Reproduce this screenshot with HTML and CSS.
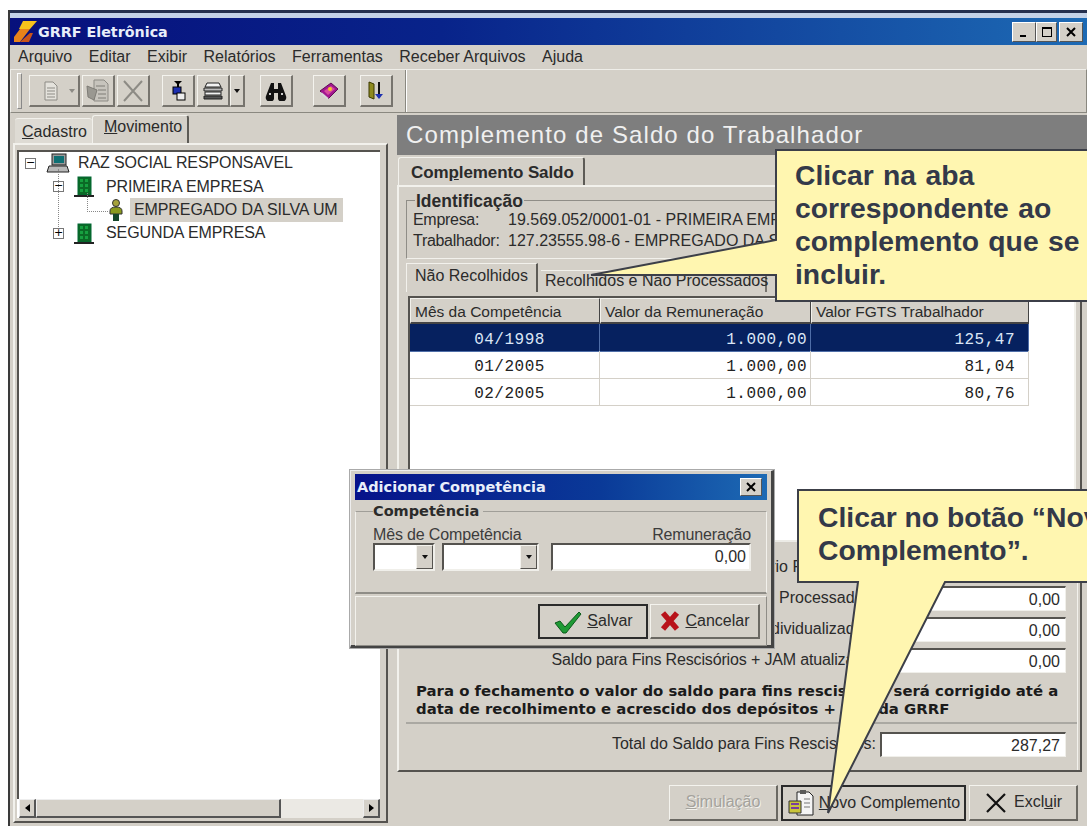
FILE: index.html
```html
<!DOCTYPE html>
<html lang="pt-BR">
<head>
<meta charset="utf-8">
<title>GRRF Eletrônica</title>
<link rel="stylesheet" href="styles.css">
</head>
<body>
<div class="window">
  <div class="top-edge"></div>
  <header class="titlebar">
    <svg class="logo" width="24" height="24" viewBox="0 0 24 24"><polygon points="9,1 23,1 16,9 5,9" fill="#f6c21c"/><polygon points="6,9 16,9 6,22 0,22 0,17" fill="#e8831a"/><polygon points="6,22 16,13 19,13 15,22" fill="#c9541a"/></svg>
    <span class="title-text">GRRF Eletrônica</span>
    <div class="win-buttons">
      <span class="win-btn"><svg width="14" height="14" viewBox="0 0 14 14"><rect x="3" y="10" width="6" height="2" fill="#000"/></svg></span>
      <span class="win-btn thin"><svg width="14" height="14" viewBox="0 0 14 14"><rect x="2.500" y="2.500" width="9" height="9" fill="none" stroke="#000"/><rect x="2" y="2" width="10" height="2" fill="#000"/></svg></span>
      <span class="win-btn gap"><svg width="14" height="14" viewBox="0 0 14 14"><path d="M3 3l8 8M11 3l-8 8" stroke="#000" stroke-width="2"/></svg></span>
    </div>
  </header>
  <nav class="menubar">
    <span>Arquivo</span><span>Editar</span><span>Exibir</span><span>Relatórios</span><span>Ferramentas</span><span>Receber Arquivos</span><span>Ajuda</span>
  </nav>
  <div class="toolbar">
    <div class="tool-band">
      <span class="grip"></span>
      <span class="tool wide"><svg width="20" height="22" viewBox="0 0 20 22"><path d="M4 2h8l4 4v14H4z" fill="#e4e2dc" stroke="#8d8b85"/><path d="M6 8h8M6 11h8M6 14h8M6 17h8" stroke="#8d8b85"/></svg><i class="caret muted"></i></span>
      <span class="tool"><svg width="26" height="26" viewBox="0 0 26 26"><path d="M9 2h10l4 4v17H9z" fill="#c7c4bd" stroke="#8d8b85"/><path d="M2 8l10 4-3 10-6-3z" fill="#9a9891" stroke="#7e7c76"/><path d="M11 8h9M13 12h8M13 16h8M13 20h8" stroke="#7e7c76"/></svg></span>
      <span class="tool"><svg width="26" height="26" viewBox="0 0 26 26"><path d="M4 3l18 20M22 3L4 23" stroke="#8d8b85" stroke-width="2"/></svg></span>
      <span class="tool-gap"></span>
      <span class="tool"><svg width="20" height="24" viewBox="0 0 20 24"><path d="M6 2h8l-4 4z" fill="#000"/><rect x="9" y="5" width="2" height="4" fill="#000"/><rect x="5" y="8" width="8" height="7" fill="#1c2fb0" stroke="#000"/><rect x="9" y="14" width="8" height="7" fill="#eee" stroke="#000"/></svg></span>
      <span class="tool"><svg width="22" height="22" viewBox="0 0 22 22"><path d="M5 3h12l2 4H3z" fill="#f2f2f2" stroke="#222"/><path d="M2 8h18v3H2z" fill="#bbb" stroke="#222"/><path d="M3 12h16v3H3z" fill="#f2f2f2" stroke="#222"/><path d="M2 16h18v3H2z" fill="#555" stroke="#222"/></svg></span>
      <span class="tool narrow"><i class="caret"></i></span>
      <span class="tool-gap mid"></span>
      <span class="tool"><svg width="24" height="20" viewBox="0 0 24 20"><path d="M7 2h3v6h4V2h3l5 13a3 3 0 0 1-8 3v-6h-4v6a3 3 0 0 1-8-3z" fill="#111"/><rect x="5" y="12" width="2" height="2" fill="#ccc"/><rect x="17" y="12" width="2" height="2" fill="#ccc"/></svg></span>
      <span class="tool-gap small"></span>
      <span class="tool"><svg width="22" height="20" viewBox="0 0 22 20"><path d="M2 10l11-8 7 6-10 10z" fill="#a2168f" stroke="#5e0d54"/><path d="M6 10l7-5 4 3-7 6z" fill="#d84a9f"/><circle cx="12" cy="8" r="2" fill="#f4c530"/><path d="M3 12l7 6" stroke="#d9d9d9" stroke-width="2"/></svg></span>
      <span class="tool-gap tiny"></span>
      <span class="tool"><svg width="22" height="24" viewBox="0 0 22 24"><path d="M4 3l5 2v15l-5-2z" fill="#8e8a1e" stroke="#3a3800"/><path d="M14 3v14" stroke="#111" stroke-width="2"/><path d="M10 15h8l-4 5z" fill="#1c2fb0"/></svg></span>
    </div>
    <div class="tool-rest"></div>
  </div>

  <main class="workspace">
    <aside class="side">
      <div class="side-tabs">
        <span class="side-tab"><u>C</u>adastro</span>
        <span class="side-tab active"><u>M</u>ovimento</span>
      </div>
      <div class="tree-frame">
        <div class="tree">
          <div class="node lvl0">
            <span class="box">−</span>
            <svg class="tree-icon" width="24" height="21" viewBox="0 0 24 21"><rect x="6" y="1" width="14" height="11" fill="#9a9a9a" stroke="#222"/><rect x="8" y="3" width="10" height="7" fill="#0e6f73"/><path d="M3 13h18l2 6H1z" fill="#b8b8b8" stroke="#222"/></svg>
            <span class="node-text">RAZ SOCIAL RESPONSAVEL</span>
          </div>
          <div class="node lvl1 branch">
            <span class="box">−</span>
            <svg class="tree-icon" width="20" height="21" viewBox="0 0 20 21"><rect x="4" y="1" width="13" height="18" fill="#0b6a26" stroke="#063"/><path d="M6 3h3v3H6zM11 3h3v3h-3zM6 8h3v3H6zM11 8h3v3h-3zM6 13h3v3H6zM11 13h3v3h-3z" fill="#17a040"/><rect x="0" y="19" width="20" height="2" fill="#222"/></svg>
            <span class="node-text">PRIMEIRA EMPRESA</span>
          </div>
          <div class="node lvl2 leaf">
            <svg class="tree-icon" width="14" height="23" viewBox="0 0 14 23"><circle cx="7" cy="4" r="3.500" fill="#a6a33c" stroke="#333"/><path d="M1 12q0-4 6-4t6 4v3H1z" fill="#8a9a1e" stroke="#333"/><path d="M4 15h6v7H4z" fill="#14462a"/></svg>
            <span class="node-text selected">EMPREGADO DA SILVA UM</span>
          </div>
          <div class="node lvl1">
            <span class="box">+</span>
            <svg class="tree-icon" width="20" height="21" viewBox="0 0 20 21"><rect x="4" y="1" width="13" height="18" fill="#0b6a26" stroke="#063"/><path d="M6 3h3v3H6zM11 3h3v3h-3zM6 8h3v3H6zM11 8h3v3h-3zM6 13h3v3H6zM11 13h3v3h-3z" fill="#17a040"/><rect x="0" y="19" width="20" height="2" fill="#222"/></svg>
            <span class="node-text">SEGUNDA EMPRESA</span>
          </div>
        </div>
        <div class="hscroll">
          <span class="sb-btn"><i class="arrow-left"></i></span>
          <span class="sb-thumb"></span>
          <span class="sb-track"></span>
          <span class="sb-btn"><i class="arrow-right"></i></span>
        </div>
      </div>
    </aside>

    <section class="content">
      <h1 class="page-title">Complemento de Saldo do Trabalhador</h1>
      <div class="tab-strip">
        <span class="main-tab">Com<u>p</u>lemento Saldo</span>
      </div>
      <div class="tab-body">
        <div class="id-group">
          <span class="group-legend">Identificação</span>
          <div class="id-row"><span class="id-label">Empresa:</span><span>19.569.052/0001-01 - PRIMEIRA EMPRESA</span></div>
          <div class="id-row"><span class="id-label">Trabalhador:</span><span>127.23555.98-6 - EMPREGADO DA SILVA UM</span></div>
        </div>
        <div class="sub-tabs">
          <span class="sub-tab active">Não Recolhidos</span>
          <span class="sub-tab">Recolhidos e Não Processados</span>
        </div>
        <div class="grid-frame">
          <div class="grid">
            <div class="grid-head">Mês da Competência</div>
            <div class="grid-head">Valor da Remuneração</div>
            <div class="grid-head">Valor FGTS Trabalhador</div>
            <div class="cell month sel">04/1998</div>
            <div class="cell num sel">1.000,00</div>
            <div class="cell num sel pad">125,47</div>
            <div class="cell month">01/2005</div>
            <div class="cell num">1.000,00</div>
            <div class="cell num pad">81,04</div>
            <div class="cell month">02/2005</div>
            <div class="cell num">1.000,00</div>
            <div class="cell num pad">80,76</div>
          </div>
        </div>
        <div class="totals">
          <div class="total-row"><span>Salário Recolhidos:</span><span class="field">0,00</span></div>
          <div class="total-row"><span>Processados:</span><span class="field">0,00</span></div>
          <div class="total-row"><span>Individualizados:</span><span class="field">0,00</span></div>
          <div class="total-row"><span class="tight">Saldo para Fins Rescisórios + JAM atualizado:</span><span class="field">0,00</span></div>
          <p class="remark">Para o fechamento o valor do saldo para fins rescisórios será corrigido até a<br>data de recolhimento e acrescido dos depósitos + JAM da GRRF</p>
          <div class="grand-row"><span>Total do Saldo para Fins Rescisórios:</span><span class="field">287,27</span></div>
        </div>
      </div>
      <footer class="actions">
        <span class="btn disabled"><span><u>S</u>imulação</span></span>
        <span class="btn default"><svg width="28" height="28" viewBox="0 0 28 28"><path d="M10 3h12l4 4v19H10z" fill="#f4f4f4" stroke="#222"/><path d="M13 1h6v4h-6z" fill="#5a5a5a"/><path d="M2 12h12v12H2z" fill="#c9c43a" stroke="#333"/><path d="M4 15h8M4 19h8" stroke="#7a3c9e" stroke-width="2"/><path d="M17 10h6M17 14h6M17 18h6" stroke="#777"/></svg><span><u>N</u>ovo Complemento</span></span>
        <span class="btn"><svg width="24" height="24" viewBox="0 0 24 24"><path d="M3 3l18 18M21 3L3 21" stroke="#111" stroke-width="2.200"/></svg><span>Excl<u>u</u>ir</span></span>
      </footer>
    </section>
  </main>
</div>

<div class="dialog">
  <div class="dialog-title">
    <span>Adicionar Competência</span>
    <span class="dialog-close"><svg width="12" height="12" viewBox="0 0 12 12"><path d="M2 2l8 8M10 2l-8 8" stroke="#000" stroke-width="2"/></svg></span>
  </div>
  <div class="dialog-group">
    <span class="group-legend big">Competência</span>
    <div class="dialog-labels"><span>Mês de Competência</span><span>Remuneração</span></div>
    <div class="dialog-inputs">
      <span class="combo c1"><i class="combo-btn"><i class="caret"></i></i></span>
      <span class="combo c2"><i class="combo-btn"><i class="caret"></i></i></span>
      <span class="amount">0,00</span>
    </div>
  </div>
  <div class="dialog-actions">
    <span class="btn default dlg"><svg width="30" height="24" viewBox="0 0 30 24"><path d="M2 13l5-2 5 6L26 2l2 2-15 19h-3z" fill="#1f9a35" stroke="#0b5a1a"/></svg><span><u>S</u>alvar</span></span>
    <span class="btn dlg"><svg width="22" height="24" viewBox="0 0 22 24"><path d="M4 4l14 16M18 4L4 20" stroke="#b8121a" stroke-width="5.500"/></svg><span><u>C</u>ancelar</span></span>
  </div>
</div>

<svg class="balloons" width="1087" height="826" viewBox="0 0 1087 826">
  <polygon points="776,150 1092,150 1092,301 776,301 776,275 591,275 776,240" fill="#fff6b0" stroke="#3c3f48" stroke-width="2"/>
  <polygon points="798,490 1092,490 1092,582 945,582 828,813 858,582 798,582" fill="#fff6b0" stroke="#3c3f48" stroke-width="2"/>
</svg>
<div class="balloon-text first">Clicar na aba<br>correspondente ao<br>complemento que se deseja<br>incluir.</div>
<div class="balloon-text second">Clicar no botão “Novo<br>Complemento”.</div>
</body>
</html>
```
FILE: styles.css
```css
* { box-sizing: border-box; }

html, body { margin: 0; padding: 0; }

body {
  position: relative;
  width: 1087px;
  height: 826px;
  overflow: hidden;
  background: #fff;
  padding: 10px 0 0 8px;
  font: 16px/1.15 "Liberation Sans", Arial, sans-serif;
  color: #2b2b2b;
}

u { text-decoration: underline; }
i { font-style: normal; display: block; }

.window {
  height: 816px;
  display: flex;
  flex-direction: column;
  background: #d4d0c8;
  border-left: 2px solid #3a3a3a;
}

.top-edge {
  height: 8px;
  border-top: 3px solid #25304f;
  background: #c4d2e8;
}

/* Title bar */
.titlebar {
  height: 27px;
  display: flex;
  align-items: center;
  padding-left: 4px;
  background: linear-gradient(90deg, #07107c, #08238a 40%, #1d6ab4);
}
.logo { margin-right: 0; }
.title-text {
  color: #e8eefa;
  font: bold 14.300px "DejaVu Sans", sans-serif;
}
.win-buttons { margin-left: auto; display: flex; padding-right: 4px; }
.win-btn {
  width: 24px;
  height: 20px;
  display: flex;
  align-items: center;
  justify-content: center;
  background: #d4d0c8;
  border: 1px solid;
  border-color: #fff #555 #555 #fff;
}
.win-btn.thin { width: 21px; }
.win-btn.gap { margin-left: 2px; }

/* Menu */
.menubar {
  height: 24px;
  display: flex;
  align-items: center;
  gap: 16.500px;
  padding-left: 8px;
}

/* Toolbar */
.toolbar {
  height: 44px;
  display: flex;
  border: 1px solid;
  border-color: #efeee9 #8a8880 #8a8880 #efeee9;
}
.tool-band {
  width: 395px;
  display: flex;
  align-items: center;
  padding-left: 6px;
  border-right: 1px solid #8a8880;
}
.tool-rest { flex: 1; border-left: 1px solid #fff; }
.grip {
  width: 5px;
  height: 36px;
  margin-right: 7px;
  border: 1px solid;
  border-color: #fff #888 #888 #fff;
}
.tool {
  width: 33px;
  height: 32px;
  margin-right: 2px;
  display: flex;
  align-items: center;
  justify-content: center;
  border: 1px solid;
  border-width: 1px 2px 2px 1px;
  border-color: #f4f3ee #77746e #77746e #f4f3ee;
}
.tool.wide { width: 51px; gap: 8px; justify-content: flex-start; padding-left: 11px; }
.tool.narrow { width: 15px; margin-left: -2px; }
.tool-gap { width: 10px; }
.tool-gap.mid { width: 13px; }
.tool-gap.small { width: 18px; }
.tool-gap.tiny { width: 12px; }
.caret {
  width: 0;
  height: 0;
  border: 3px solid transparent;
  border-top: 4px solid #111;
  border-bottom: 0;
}
.caret.muted { border-top-color: #8d8b85; }

/* Workspace */
.workspace { flex: 1; display: flex; min-height: 0; }

.side {
  width: 387px;
  display: flex;
  flex-direction: column;
}
.side-tabs {
  height: 30px;
  display: flex;
  align-items: flex-end;
  padding-left: 5px;
}
.side-tab {
  height: 25px;
  width: 77px;
  padding: 4px 0 0 7px;
  background: #dedbd4;
  border-radius: 3px 3px 0 0;
  border-top: 1px solid #f2f1ec;
}
.side-tab.active {
  height: 28px;
  width: 97px;
  padding: 2px 0 0 11px;
  background: #d4d0c8;
  border-left: 1px solid #f2f1ec;
  border-right: 2px solid #5d5b56;
}
.tree-frame {
  flex: 1;
  margin: 0 9px 3px 3px;
  padding: 5px 6px 3px 2px;
  display: flex;
  flex-direction: column;
  border: 2px solid;
  border-color: #f2f1ec #55534f #55534f #f2f1ec;
}
.tree {
  flex: 1;
  position: relative;
  background: #fff;
  border-top: 2px solid #55534f;
  border-left: 2px solid #55534f;
}
.node {
  position: relative;
  height: 23.300px;
  display: flex;
  align-items: center;
  letter-spacing: -0.1px;
}
.lvl0 { padding-left: 6px; }
.lvl1 { padding-left: 34px; }
.lvl2 { padding-left: 90px; }
.box {
  width: 11px;
  height: 11px;
  margin-right: 10px;
  border: 1px solid #777;
  background: #fff;
  font: 11px/8px "DejaVu Sans", sans-serif;
  text-align: center;
  color: #000;
}
.tree-icon { margin-right: 8px; flex: none; }
.lvl1 .tree-icon { margin-right: 12px; }
.lvl0 .tree-icon { margin-right: 8px; }
.lvl2 .tree-icon { margin-right: 7px; }
.node-text.selected { background: #d4d0c8; padding: 3px 0 3px 4px; width: 213px; white-space: nowrap; }

/* Dotted tree connectors */
.branch::before {
  content: "";
  position: absolute;
  left: 39px;
  top: -6px;
  height: 58px;
  border-left: 1px dotted #888;
}
.leaf::before {
  content: "";
  position: absolute;
  left: 68px;
  top: -6px;
  width: 20px;
  height: 18px;
  border-left: 1px dotted #888;
  border-bottom: 1px dotted #888;
}

.hscroll { height: 19px; display: flex; background: #fff; padding-left: 2px; }
.sb-btn {
  width: 17px;
  display: flex;
  align-items: center;
  justify-content: center;
  background: #d4d0c8;
  border: 1px solid;
  border-color: #eee #555 #555 #eee;
  border-width: 1px 2px 2px 1px;
}
.sb-thumb {
  width: 245px;
  background: #d4d0c8;
  border: 1px solid;
  border-color: #eee #555 #555 #eee;
  border-width: 1px 2px 2px 1px;
}
.sb-track { flex: 1; background: #ebe9e4; }
.arrow-left { border: 4px solid transparent; border-right: 5px solid #000; border-left: 0; }
.arrow-right { border: 4px solid transparent; border-left: 5px solid #000; border-right: 0; }

/* Right-hand content */
.content {
  flex: 1;
  min-width: 0;
  display: flex;
  flex-direction: column;
}
.page-title {
  height: 40px;
  margin: 2px 0 0;
  padding: 6px 0 0 9px;
  background: #7e7e7e;
  color: #f0f0f0;
  font: 24px/1.2 "Liberation Sans", sans-serif;
  letter-spacing: 1.100px;
}
.tab-strip { height: 30px; padding: 2px 0 0 1px; display: flex; }
.main-tab {
  width: 187px;
  padding: 5px 0 0 12px;
  font-weight: bold;
  font-size: 17px;
  letter-spacing: -0.1px;
  border-top: 1px solid #f2f1ec;
  border-left: 1px solid #f2f1ec;
  border-right: 2px solid #5d5b56;
  border-radius: 3px 3px 0 0;
}
.tab-body {
  height: 587px;
  margin-right: 5px;
  padding: 13px 0 0 7px;
  display: flex;
  flex-direction: column;
  border: 2px solid;
  border-color: #f2f1ec #55534f #55534f #f2f1ec;
}
.id-group {
  height: 59px;
  margin-right: 2px;
  padding-left: 6px;
  border: 1px solid;
  border-color: #8f8d87 #f2f1ec #f2f1ec #8f8d87;
}
.group-legend {
  display: block;
  width: fit-content;
  margin: -8px 0 1px 2px;
  padding: 0 1px;
  background: #d4d0c8;
  font-weight: bold;
  font-size: 17.500px;
  line-height: 16px;
}
.id-row { display: flex; height: 21px; align-items: center; white-space: nowrap; }
.id-label { width: 95px; letter-spacing: -0.300px; }
.sub-tabs {
  height: 37px;
  padding-top: 4px;
  display: flex;
  align-items: flex-end;
  padding-bottom: 4px;
}
.sub-tab {
  height: 22px;
  width: 226px;
  margin-left: 3px;
  padding: 1px 0 0 4px;
  border-top: 1px solid #f2f1ec;
  border-right: 2px solid #77746e;
  white-space: nowrap;
}
.sub-tab.active {
  height: 29px;
  width: 132px;
  margin-left: 0;
  padding: 3px 0 0 8px;
  border-left: 1px solid #f2f1ec;
  border-right: 2px solid #5d5b56;
}
.grid-frame {
  height: 246px;
  margin-left: 2px;
  margin-right: 4px;
  background: #fff;
  border: 2px solid;
  border-color: #55534f #f2f1ec #ecebe6 #55534f;
}
.grid {
  display: grid;
  grid-template-columns: 190px 211px 218px;
  grid-auto-rows: 27px;
  width: 619px;
}
.grid-head {
  height: 26px;
  padding: 4px 0 0 4px;
  background: #d4d0c8;
  border-right: 1px solid #444;
  border-bottom: 2px solid #444;
  border-top: 1px solid #f2f1ec;
  border-left: 1px solid #f2f1ec;
  font-size: 15.500px;
  white-space: nowrap;
  overflow: hidden;
}
.cell {
  font: 16px/32px "Liberation Mono", monospace;
  letter-spacing: 0.500px;
  border-right: 1px solid #d4d0c8;
  border-bottom: 1px solid #d4d0c8;
  color: #222;
  margin-top: -1px;
  height: 28px;
}
.cell.month { text-align: center; padding-left: 10px; }
.cell.num { text-align: right; padding-right: 3px; }
.cell.pad { padding-right: 13px; }
.cell.sel { background: #06215f; color: #dbe6f6; border-color: #4f6ea8; }

.totals {
  flex: 1;
  margin-right: 2px;
  padding: 10px 11px 0 10px;
  display: flex;
  flex-direction: column;
  border-right: 1px solid #f2f1ec;
}
.total-row {
  height: 31px;
  display: flex;
  justify-content: flex-end;
  align-items: center;
  gap: 4px;
  white-space: nowrap;
}
.tight { letter-spacing: -0.150px; }
.field {
  width: 186px;
  height: 25px;
  flex: none;
  padding: 3px 5px 0 0;
  background: #fff;
  text-align: right;
  border: 2px solid;
  border-color: #55534f #f0efea #f0efea #55534f;
  border-right-width: 1px;
  border-bottom-width: 1px;
}
.remark {
  margin: 6px 0 0;
  font: bold 14.900px/18px "DejaVu Sans", sans-serif;
  color: #1b1b1b;
  white-space: nowrap;
}
.grand-row {
  margin: 4px -11px 0 -10px;
  padding: 8px 11px 0 0;
  border-top: 2px solid #aaa8a2;
  display: flex;
  justify-content: flex-end;
  align-items: center;
  gap: 4px;
}

/* Bottom actions */
.actions {
  flex: 1;
  display: flex;
  justify-content: flex-end;
  align-items: flex-start;
  gap: 3px;
  padding: 13px 9px 0 0;
}
.btn {
  height: 36px;
  width: 109px;
  display: flex;
  align-items: center;
  justify-content: center;
  gap: 6px;
  border: 1px solid;
  border-width: 1px 2px 2px 1px;
  border-color: #f4f3ee #6a6862 #6a6862 #f4f3ee;
}
.btn.disabled { color: #a4a29c; text-shadow: 1px 1px 0 #f2f1ec; }
.btn.default { width: 185px; border: 2px solid #2b2b2b; gap: 4px; }

/* Modal dialog */
.dialog {
  position: absolute;
  left: 350px;
  top: 470px;
  width: 424px;
  height: 178px;
  padding: 3px 4px;
  background: #d4d0c8;
  border: 1px solid;
  border-color: #eee #444 #444 #eee;
  border-width: 1px 3px 3px 1px;
  box-shadow: 0 0 0 1px #aaa;
}
.dialog-title {
  height: 26px;
  display: flex;
  align-items: center;
  justify-content: space-between;
  padding: 0 5px 0 2px;
  background: linear-gradient(90deg, #06128a, #0a3a98 60%, #1d6ab4);
  color: #e8eefa;
  font: bold 14.500px "DejaVu Sans", sans-serif;
}
.dialog-close {
  width: 22px;
  height: 18px;
  display: flex;
  align-items: center;
  justify-content: center;
  background: #d4d0c8;
  border: 1px solid;
  border-color: #fff #555 #555 #fff;
}
.dialog-group {
  height: 83px;
  margin-top: 11px;
  padding: 0 10px 0 17px;
  border: 1px solid;
  border-color: #a09e98 #f2f1ec #8f8d87 #f2f1ec;
  border-bottom-width: 2px;
}
.group-legend.big {
  font: bold 14.500px/18px "DejaVu Sans", sans-serif;
  margin: -10px 0 6px 0;
  padding: 0 4px 0 0;
}
.dialog-labels {
  display: flex;
  justify-content: space-between;
  padding-right: 5px;
  line-height: 17px;
  letter-spacing: -0.150px;
  color: #3c3c3c;
}
.dialog-inputs { display: flex; }
.combo, .amount {
  height: 28px;
  background: #fff;
  border: 2px solid;
  border-color: #55534f #f0efea #f0efea #55534f;
  display: flex;
  justify-content: flex-end;
}
.c1 { width: 62px; margin-right: 7px; }
.c2 { width: 97px; margin-right: 12px; }
.combo-btn {
  width: 17px;
  height: 100%;
  display: flex;
  align-items: center;
  justify-content: center;
  background: #d4d0c8;
  border: 1px solid;
  border-color: #f4f3ee #55534f #55534f #f4f3ee;
}
.amount {
  width: 200px;
  padding-right: 3px;
  align-items: center;
}
.dialog-actions {
  height: 50px;
  margin-top: 2px;
  padding: 7px 6px 0 0;
  display: flex;
  justify-content: flex-end;
  gap: 2px;
  border: 1px solid;
  border-color: #f2f1ec #8f8d87 #8f8d87 #f2f1ec;
}
.btn.dlg { width: 110px; height: 35px; gap: 4px; }

/* Help balloons */
.balloons { position: absolute; left: 0; top: 0; }
.balloon-text {
  position: absolute;
  font-family: "Liberation Sans", sans-serif;
  font-weight: bold;
  font-size: 28.300px;
  line-height: 33px;
  color: #333949;
  white-space: nowrap;
  overflow: hidden;
}
.first { left: 795px; top: 159px; width: 292px; word-spacing: 1.500px; }
.second { left: 818px; top: 501px; width: 269px; }
```
